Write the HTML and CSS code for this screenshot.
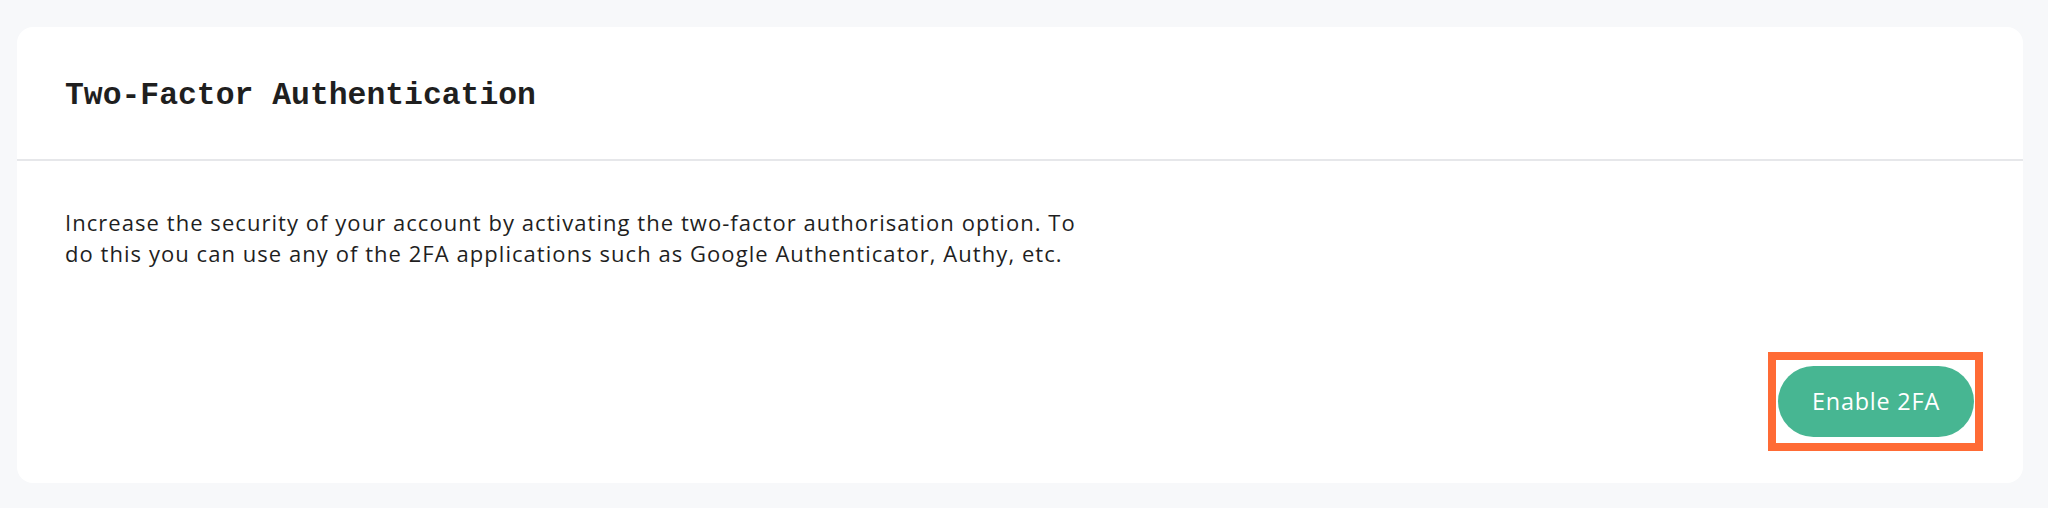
FILE: index.html
```html
<!DOCTYPE html>
<html lang="en">
<head>
    <meta charset="UTF-8">
    <meta name="viewport" content="width=device-width, initial-scale=1.0">
    <title>Two-Factor Authentication</title>
    <link rel="stylesheet" href="styles.css">
</head>
<body>
    <div class="card">
        <div class="card-header">
            <h2>Two-Factor Authentication</h2>
        </div>
        <div class="card-body">
            <p class="intro">Increase the security of your account by activating the two-factor authorisation option. To do this you can use any of the 2FA applications such as Google Authenticator, Authy, etc.</p>
            <div class="actions">
                <span class="highlight">
                    <button class="btn-enable">Enable 2FA</button>
                </span>
            </div>
        </div>
    </div>
</body>
</html>
```

FILE: styles.css
```css
*{
    margin: 0;
    padding: 0;
    box-sizing: border-box;
}

body{
    background-color: #f7f8fa;
    padding: 27px 25px 25px 17px;
    font-family: "Open Sans", "Noto Sans", sans-serif;
    color: #1f1f1f;
}

.card{
    background-color: #fff;
    border-radius: 16px;
    height: 456px;
    display: flex;
    flex-direction: column;
}

.card-header{
    padding: 45px 48px 40px 48px;
    border-bottom: 2px solid #e6e7ea;
}

.card-header h2{
    font-family: "Liberation Mono", "DejaVu Sans Mono", monospace;
    font-weight: 700;
    font-size: 31.4px;
    line-height: 47px;
    color: #1f1f1f;
}

.card-body{
    flex: 1;
    padding: 46px 40px 32px 48px;
    display: flex;
    flex-direction: column;
}

.intro{
    font-size: 22px;
    line-height: 31.2px;
    letter-spacing: 1.05px;
    max-width: 1035px;
}

.actions{
    margin-top: auto;
    display: flex;
    justify-content: flex-end;
}

.highlight{
    display: inline-flex;
    padding: 6px 1px 6px 2px;
    border: 8px solid #ff6b35;
}

.btn-enable{
    font-family: "Open Sans", "Noto Sans", sans-serif;
    font-size: 23.4px;
    line-height: 35px;
    letter-spacing: 0.8px;
    padding: 18px 34px;
    color: #fff;
    background-color: #47b692;
    border: none;
    border-radius: 999px;
    cursor: pointer;
}
```
